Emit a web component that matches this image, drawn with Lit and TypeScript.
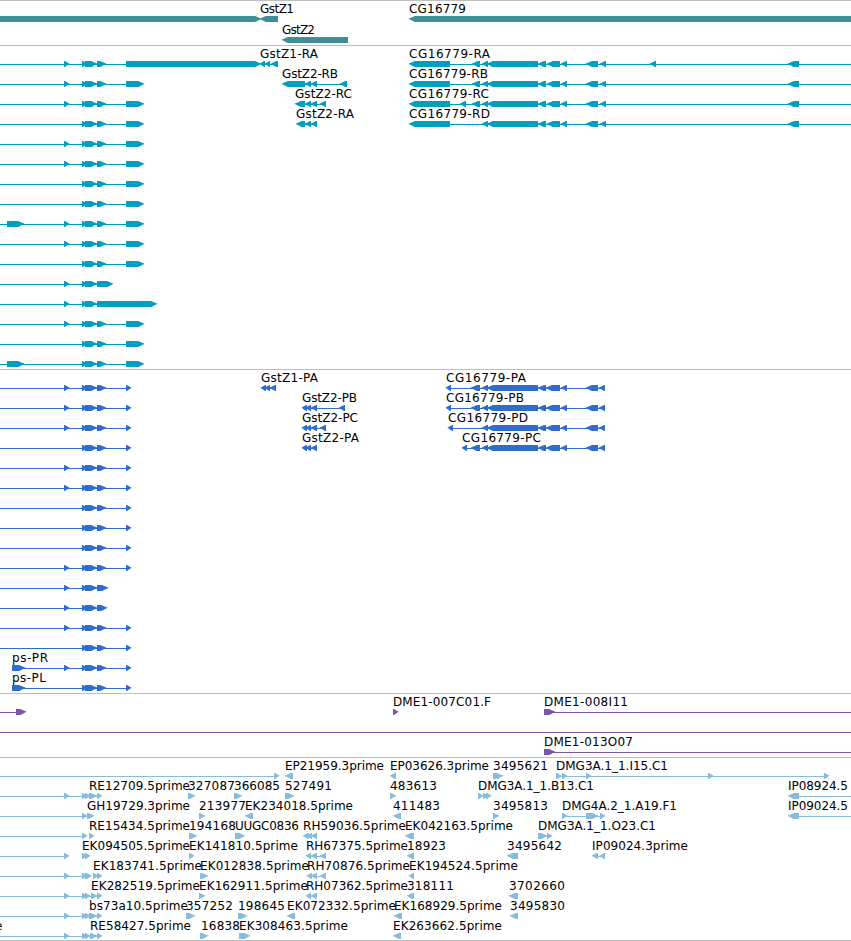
import { LitElement, html, svg, css } from "lit";
import { customElement, property } from "lit/decorators.js";

type Dir = 1 | -1;
type Exon = [number, number];

interface Feature {
  dir: Dir;
  exons: Exon[];
  line?: [number, number];
}

interface Label {
  text: string;
  x: number;
  width: number;
}

interface Row {
  features: Feature[];
  labels: Label[];
}

interface Track {
  name: string;
  rows: Row[];
}

const WIDTH = 851;

const f = (dir: Dir, exons: Exon[], line?: [number, number]): Feature => ({ dir, exons, line });
const l = (text: string, x: number, end: number): Label => ({ text, x, width: end - x });
const row = (features: Feature[], labels: Label[] = []): Row => ({ features, labels });

/* ---- genes ---- */
const genes: Row[] = [
  row(
    [f(1, [[0, 261]]), f(-1, [[260, 278]]), f(-1, [[409, 860]])],
    [l("GstZ1", 260, 294), l("CG16779", 409, 466)],
  ),
  row([f(-1, [[282, 348]])], [l("GstZ2", 282, 315)]),
];

/* ---- transcripts ---- */
const small: Exon = [64, 69];
const pair: Exon[] = [[82, 85], [85, 97]];

const psTranscript = (withSmall: boolean, tail: Exon[] = [[97, 106], [126, 144]], head: Exon[] = []): Feature => {
  const exons = [...head, ...(withSmall ? [small] : []), ...pair, ...tail];
  return f(1, exons, [0, exons[exons.length - 1][1] - 3]);
};

const cgTranscript = (extra: Exon[]): Feature =>
  f(
    -1,
    [[409, 450], ...extra, [482, 488], [487, 538], [538, 546], [547, 560], [561, 567], [586, 598], [600, 606], [788, 799]],
    [412, WIDTH],
  );

const transcripts: Row[] = [
  row(
    [
      psTranscript(true, [[97, 106], [126, 261]]),
      f(-1, [[260, 265], [265, 270], [271, 278]], [263, 276]),
      cgTranscript([[472, 480], [650, 656]]),
    ],
    [l("GstZ1-RA", 260, 318), l("CG16779-RA", 409, 490)],
  ),
  row(
    [
      psTranscript(true),
      f(-1, [[282, 305], [305, 311], [311, 317], [340, 347]], [285, 348]),
      cgTranscript([[472, 480]]),
    ],
    [l("GstZ2-RB", 282, 338), l("CG16779-RB", 409, 488)],
  ),
  row(
    [
      psTranscript(true),
      f(-1, [[295, 305], [305, 311], [311, 317], [320, 326]], [298, 326]),
      cgTranscript([[460, 466], [472, 480]]),
    ],
    [l("GstZ2-RC", 295, 352), l("CG16779-RC", 409, 489)],
  ),
  row(
    [
      psTranscript(false),
      f(-1, [[296, 305], [305, 311], [311, 317]], [299, 317]),
      cgTranscript([]),
    ],
    [l("GstZ2-RA", 296, 354), l("CG16779-RD", 409, 490)],
  ),
  row([psTranscript(true)]),
  row([psTranscript(true)]),
  row([psTranscript(false)]),
  row([psTranscript(false)]),
  row([psTranscript(true, undefined, [[7, 24]])]),
  row([psTranscript(true)]),
  row([psTranscript(false)]),
  row([psTranscript(true, [[97, 113]])]),
  row([psTranscript(true, [[97, 157]])]),
  row([psTranscript(true)]),
  row([psTranscript(false)]),
  row([psTranscript(false, undefined, [[7, 24]])]),
];

/* ---- coding sequences ---- */
const psCds = (withSmall: boolean, tail: Exon[] = [[97, 106], [126, 131]]): Feature => psTranscript(withSmall, tail);

const psCdsFrom12 = (withSmall: boolean): Feature =>
  f(1, [[12, 25], ...(withSmall ? [small] : []), ...pair, [97, 106], [126, 131]], [12, 129]);

const cgCds = (start: number, extra: Exon[]): Feature =>
  f(
    -1,
    [[start, start + 5], ...extra, [482, 488], [487, 538], [538, 546], [546, 560], [561, 567], [586, 598], [599, 605]],
    [start + 3, 605],
  );

const cds: Row[] = [
  row(
    [psCds(true), f(-1, [[261, 266], [265, 270], [270, 276]], [264, 276]), cgCds(446, [[471, 480]])],
    [l("GstZ1-PA", 261, 318), l("CG16779-PA", 446, 526)],
  ),
  row(
    [psCds(true), f(-1, [[302, 307], [306, 311], [311, 317], [339, 345]], [305, 345]), cgCds(446, [[471, 480]])],
    [l("GstZ2-PB", 302, 357), l("CG16779-PB", 446, 524)],
  ),
  row(
    [psCds(true), f(-1, [[302, 307], [306, 311], [311, 317], [320, 326]], [305, 326]), cgCds(448, [])],
    [l("GstZ2-PC", 302, 358), l("CG16779-PD", 448, 528)],
  ),
  row(
    [psCds(false), f(-1, [[302, 307], [306, 311], [311, 317]], [305, 317]), cgCds(462, [[471, 480]])],
    [l("GstZ2-PA", 302, 359), l("CG16779-PC", 462, 541)],
  ),
  row([psCds(true)]),
  row([psCds(true)]),
  row([psCds(false)]),
  row([psCds(false)]),
  row([psCds(false)]),
  row([psCds(true)]),
  row([psCds(true, [[97, 108]])]),
  row([psCds(true, [[97, 107]])]),
  row([psCds(true)]),
  row([psCds(false)]),
  row([psCdsFrom12(true)], [l("ps-PR", 12, 48)]),
  row([psCdsFrom12(false)], [l("ps-PL", 12, 46)]),
];

/* ---- clones ---- */
const clones: Row[] = [
  row(
    [f(1, [[16, 26]], [0, 24]), f(1, [[393, 398]]), f(1, [[544, 555]], [544, WIDTH])],
    [l("DME1-007C01.F", 393, 491), l("DME1-008I11", 544, 628)],
  ),
  row([f(1, [], [0, WIDTH])]),
  row([f(1, [[544, 555]], [544, WIDTH])], [l("DME1-013O07", 544, 633)]),
];

/* ---- expressed sequence tags ---- */
const ests: Row[] = [
  row(
    [
      f(1, [[274, 279]], [0, 276]),
      f(-1, [[285, 293]]),
      f(-1, [[390, 396]]),
      f(1, [[493, 503]]),
      f(1, [[556, 561], [562, 567], [586, 591], [708, 713], [824, 829]], [556, 828]),
    ],
    [
      l("EP21959.3prime", 285, 384),
      l("EP03626.3prime", 390, 489),
      l("3495621", 493, 548),
      l("DMG3A.1_1.I15.C1", 556, 668),
    ],
  ),
  row(
    [
      f(1, [small, [82, 87], [85, 90], [89, 97], [97, 102]], [0, 100]),
      f(1, [[188, 195]]),
      f(1, [[234, 242]]),
      f(1, [[285, 294]]),
      f(1, [[390, 396]]),
      f(1, [[478, 483], [483, 488], [486, 491]], [478, 490]),
      f(-1, [[788, 799]], [790, WIDTH]),
    ],
    [
      l("RE12709.5prime", 89, 190),
      l("327087", 188, 235),
      l("366085", 234, 280),
      l("527491", 285, 332),
      l("483613", 390, 437),
      l("DMG3A.1_1.B13.C1", 478, 594),
      l("IP08924.5", 788, 848),
    ],
  ),
  row(
    [
      f(1, [[82, 87], [87, 94]], [0, 92]),
      f(1, [[199, 205]]),
      f(-1, [[245, 253]]),
      f(-1, [[393, 401]]),
      f(1, [[493, 499]]),
      f(1, [[562, 567], [586, 598], [600, 605]], [562, 603]),
      f(-1, [[788, 799]], [790, WIDTH]),
    ],
    [
      l("GH19729.3prime", 87, 190),
      l("213977", 199, 246),
      l("EK234018.5prime", 245, 353),
      l("411483", 393, 440),
      l("3495813", 493, 548),
      l("DMG4A.2_1.A19.F1", 562, 677),
      l("IP09024.5", 788, 848),
    ],
  ),
  row(
    [
      f(1, [[82, 87]], [0, 85]),
      f(1, [[89, 94]]),
      f(1, [[189, 197]]),
      f(1, [[235, 245]]),
      f(-1, [[303, 309], [307, 312], [311, 317]], [306, 317]),
      f(-1, [[405, 414]]),
      f(1, [[538, 547], [547, 552]], [538, 550]),
    ],
    [
      l("RE15434.5prime", 89, 190),
      l("194168", 189, 236),
      l("UUGC0836", 235, 299),
      l("RH59036.5prime", 303, 406),
      l("EK042163.5prime", 405, 513),
      l("DMG3A.1_1.O23.C1", 538, 656),
    ],
  ),
  row(
    [
      f(1, [small], [0, 67]),
      f(1, [[82, 87], [85, 90]]),
      f(1, [[189, 194]]),
      f(-1, [[306, 311], [311, 317], [320, 326]], [309, 326]),
      f(-1, [[407, 414]]),
      f(-1, [[507, 518]]),
      f(-1, [[592, 598], [600, 605]], [595, 605]),
    ],
    [
      l("EK094505.5prime", 82, 190),
      l("EK141810.5prime", 189, 298),
      l("RH67375.5prime", 306, 408),
      l("18923", 407, 446),
      l("3495642", 507, 562),
      l("IP09024.3prime", 592, 688),
    ],
  ),
  row(
    [
      f(1, [small, [82, 87], [85, 92]], [0, 90]),
      f(1, [[93, 98], [97, 102]]),
      f(1, [[200, 208]]),
      f(-1, [[307, 312], [311, 317], [320, 326]], [309, 326]),
      f(-1, [[409, 414]]),
    ],
    [
      l("EK183741.5prime", 93, 202),
      l("EK012838.5prime", 200, 309),
      l("RH70876.5prime", 307, 410),
      l("EK194524.5prime", 409, 518),
    ],
  ),
  row(
    [
      f(1, [small, [82, 87], [85, 90], [91, 97], [97, 102]], [0, 100]),
      f(1, [[199, 205]]),
      f(-1, [[306, 311], [311, 317]], [309, 317]),
      f(-1, [[407, 414]]),
      f(-1, [[509, 518]]),
    ],
    [
      l("EK282519.5prime", 91, 200),
      l("EK162911.5prime", 199, 308),
      l("RH07362.5prime", 306, 408),
      l("318111", 407, 454),
      l("3702660", 509, 565),
    ],
  ),
  row(
    [
      f(1, [small, [82, 87], [85, 90], [89, 97], [97, 102]], [0, 100]),
      f(1, [[186, 195]]),
      f(1, [[238, 247]]),
      f(-1, [[287, 295]]),
      f(-1, [[394, 402]]),
      f(-1, [[510, 518]]),
    ],
    [
      l("bs73a10.5prime", 89, 188),
      l("357252", 186, 233),
      l("198645", 238, 285),
      l("EK072332.5prime", 287, 396),
      l("EK168929.5prime", 394, 502),
      l("3495830", 510, 565),
    ],
  ),
  row(
    [
      f(1, [small, [82, 87], [85, 90], [90, 97], [97, 102]], [0, 100]),
      f(1, [[200, 208]]),
      f(1, [[239, 250]]),
      f(-1, [[393, 401]]),
    ],
    [
      l("e", -5, 2),
      l("RE58427.5prime", 90, 191),
      l("16838", 201, 240),
      l("EK308463.5prime", 239, 348),
      l("EK263662.5prime", 393, 502),
    ],
  ),
];

const tracks: Track[] = [
  { name: "gene", rows: genes },
  { name: "transcript", rows: transcripts },
  { name: "cds", rows: cds },
  { name: "clone", rows: clones },
  { name: "est", rows: ests },
];

const BAR_TOP = 13;

/** Outline of one exon, pointed in the direction of its strand. */
function exonPath([a, b]: Exon, dir: Dir): string {
  const w = b - a;
  const back = dir === 1 ? a : b;
  const x = (n: number) => back + dir * n;
  const y = (n: number) => BAR_TOP + n;
  if (w <= 6) {
    const tip = Math.max(w, 5) + 0.6;
    return `M${x(0)} ${y(0)}H${x(0.8)}L${x(tip)} ${y(2.8)}L${x(0.8)} ${y(6)}H${x(0)}Z`;
  }
  const s = Math.max(w - 6, 1.5);
  return `M${x(0)} ${y(0)}H${x(s)}L${x(w + 0.6)} ${y(2.7)}L${x(s + 0.3)} ${y(6)}H${x(0)}Z`;
}

@customElement("track-row")
export class TrackRow extends LitElement {
  @property({ attribute: false }) data: Row = { features: [], labels: [] };

  static styles = css`
    :host {
      display: block;
      height: var(--row-height, 20px);
    }
    .lane {
      display: block;
      width: 851px;
      height: 100%;
      overflow: visible;
      fill: var(--track-color);
    }
    .label {
      fill: #000;
      font-family: "DejaVu Sans", sans-serif;
      font-size: 12px;
      white-space: pre;
    }
  `;

  render() {
    return html`<svg class="lane">
      ${this.data.features.map(
        (feature) => svg`
          ${feature.line
            ? svg`<rect x=${feature.line[0]} y=${BAR_TOP + 3} width=${feature.line[1] - feature.line[0]} height="1"></rect>`
            : null}
          ${feature.exons.map((e) => svg`<path d=${exonPath(e, feature.dir)}></path>`)}`,
      )}
      ${this.data.labels.map(
        (label) =>
          svg`<text class="label" x=${label.x} y="10" textLength=${label.width} lengthAdjust="spacing">${label.text}</text>`,
      )}
    </svg>`;
  }
}

@customElement("app-root")
export class AppRoot extends LitElement {
  static styles = css`
    :host {
      display: block;
      width: 851px;
      height: 941px;
      overflow: hidden;
      background: #fff;
    }
    .track {
      border-top: 1px solid #bebebe;
      padding: 2px 0 1px;
    }
    .gene {
      --track-color: #408f96;
      --row-height: 21px;
      padding-bottom: 0;
    }
    .transcript {
      --track-color: #009fc0;
    }
    .cds {
      --track-color: #306ccc;
    }
    .clone {
      --track-color: #7757a8;
    }
    .est {
      --track-color: #87bcdf;
      padding-bottom: 0;
      border-bottom: 1px solid #bebebe;
    }
  `;

  render() {
    return tracks.map(
      (track) => html`<section class="track ${track.name}">
        ${track.rows.map((r) => html`<track-row .data=${r}></track-row>`)}
      </section>`,
    );
  }
}
